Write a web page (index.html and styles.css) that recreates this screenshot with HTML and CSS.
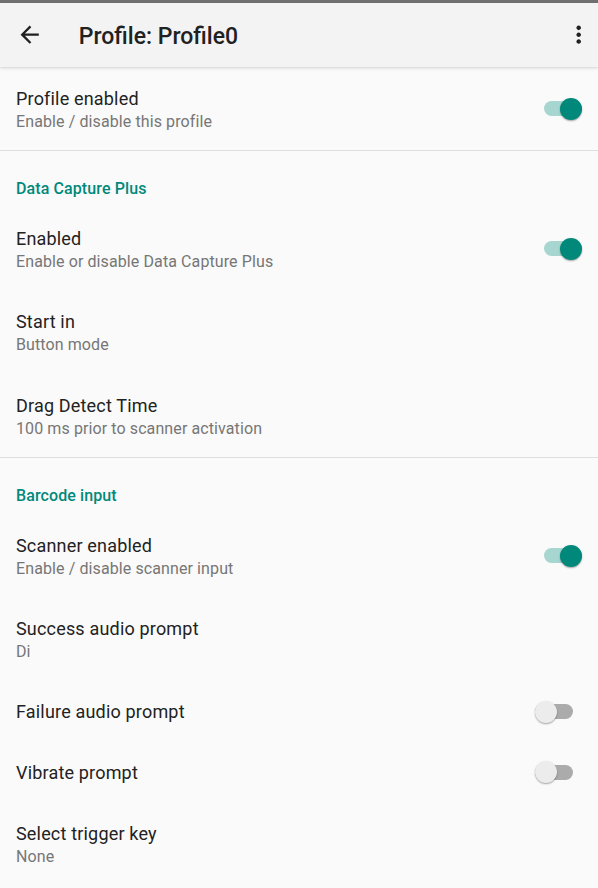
FILE: index.html
```html
<!DOCTYPE html>
<html lang="en">
<head>
<meta charset="utf-8">
<title>Profile: Profile0</title>
<link rel="stylesheet" href="styles.css">
</head>
<body>
<div class="status"></div>
<header class="appbar">
  <span class="icon-btn back" aria-label="Back">
    <svg viewBox="0 0 24 24" width="27.4" height="27.4"><path d="M20 11H7.83l5.59-5.59L12 4l-8 8 8 8 1.41-1.41L7.83 13H20v-2z" fill="#212121"/></svg>
  </span>
  <h1 class="title">Profile: Profile0</h1>
  <span class="icon-btn more" aria-label="More options">
    <svg viewBox="0 0 24 24" width="27.4" height="27.4"><path d="M12 8c1.1 0 2-.9 2-2s-.9-2-2-2-2 .9-2 2 .9 2 2 2zm0 2c-1.1 0-2 .9-2 2s.9 2 2 2 2-.9 2-2-.9-2-2-2zm0 6c-1.1 0-2 .9-2 2s.9 2 2 2 2-.9 2-2-.9-2-2-2z" fill="#212121"/></svg>
  </span>
</header>
<main class="list">
  <div class="row two">
    <div class="text"><div class="primary">Profile enabled</div><div class="secondary">Enable / disable this profile</div></div>
    <span class="switch on"><span class="track"></span><span class="thumb"></span></span>
  </div>
  <div class="divider"></div>
  <div class="category">Data Capture Plus</div>
  <div class="row two">
    <div class="text"><div class="primary">Enabled</div><div class="secondary">Enable or disable Data Capture Plus</div></div>
    <span class="switch on"><span class="track"></span><span class="thumb"></span></span>
  </div>
  <div class="row two">
    <div class="text"><div class="primary">Start in</div><div class="secondary">Button mode</div></div>
  </div>
  <div class="row two">
    <div class="text"><div class="primary">Drag Detect Time</div><div class="secondary">100 ms prior to scanner activation</div></div>
  </div>
  <div class="divider"></div>
  <div class="category">Barcode input</div>
  <div class="row two">
    <div class="text"><div class="primary">Scanner enabled</div><div class="secondary">Enable / disable scanner input</div></div>
    <span class="switch on"><span class="track"></span><span class="thumb"></span></span>
  </div>
  <div class="row two">
    <div class="text"><div class="primary">Success audio prompt</div><div class="secondary">Di</div></div>
  </div>
  <div class="row one">
    <div class="text"><div class="primary">Failure audio prompt</div></div>
    <span class="switch off"><span class="track"></span><span class="thumb"></span></span>
  </div>
  <div class="row one">
    <div class="text"><div class="primary">Vibrate prompt</div></div>
    <span class="switch off"><span class="track"></span><span class="thumb"></span></span>
  </div>
  <div class="row two">
    <div class="text"><div class="primary">Select trigger key</div><div class="secondary">None</div></div>
  </div>
</main>
</body>
</html>
```
FILE: styles.css
```css
* { box-sizing: border-box; }
html, body {
  margin: 0;
  padding: 0;
  background: #fafafa;
  font-family: Roboto, "Noto Sans", "Liberation Sans", sans-serif;
  color: #212121;
}
body { width: 598px; min-height: 888px; overflow: hidden; }

.status { height: 3px; background: #707070; }

.appbar {
  position: relative;
  z-index: 1;
  height: 64px;
  display: flex;
  align-items: center;
  padding: 0 5.6px 0 16.4px;
  background: #f3f3f3;
  box-shadow: 0 1px 2px rgba(0,0,0,0.10), 0 2px 4px rgba(0,0,0,0.06);
}
.icon-btn { display: flex; width: 27.4px; height: 27.4px; }
.icon-btn svg { display: block; }
.title {
  flex: 1;
  margin: 0 0 0 35px;
  padding-top: 3px;
  font-size: 23px;
  font-weight: 500;
  line-height: 28px;
  color: #212121;
  letter-spacing: 0;
}

.list { display: flex; flex-direction: column; }

.row {
  display: flex;
  align-items: center;
  padding: 0 16px 0 16px;
}
.row.two { height: 83.33px; padding-top: 3px; }
.row.one { height: 60.67px; padding-top: 1.5px; }
.text { flex: 1; min-width: 0; }
.primary { font-size: 18px; line-height: 22px; color: #222; letter-spacing: 0.18px; }
.secondary { font-size: 16px; line-height: 22px; padding-top: 1px; color: #767676; letter-spacing: 0.1px; }

.divider { height: 1px; background: #dedede; }

.category {
  padding: 27px 16px 7px;
  font-size: 16px;
  font-weight: 500;
  line-height: 22px;
  color: #00897b;
  letter-spacing: 0.1px;
}

.switch {
  position: relative;
  width: 38px;
  height: 22px;
  flex: none;
}
.switch .track {
  position: absolute;
  left: 0; right: 0; top: 3.5px;
  height: 15px;
  border-radius: 8px;
}
.switch .thumb {
  position: absolute;
  top: 0;
  width: 22px;
  height: 22px;
  border-radius: 50%;
  box-shadow: 0 1px 2px rgba(0,0,0,0.25), 0 1px 1px rgba(0,0,0,0.12);
}
.switch.on { margin-top: -3px; }
.switch.on .track { background: #a7d6d0; }
.switch.on .thumb { right: 0; background: #00897b; }
.switch.off { margin-right: 9px; margin-top: -1px; }
.switch.off .track { background: #ababab; }
.switch.off .thumb { left: 0; background: #ececec; }
```
